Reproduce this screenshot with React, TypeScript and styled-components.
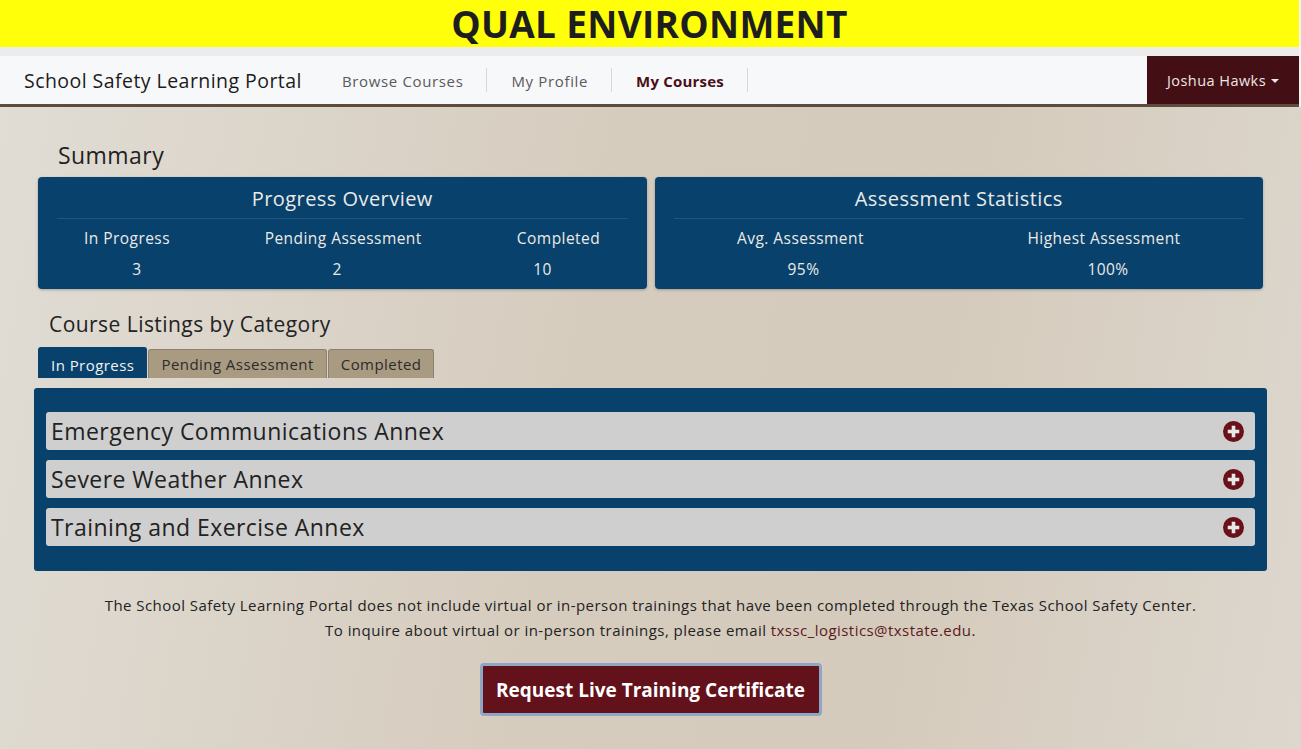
import React from "react";
import styled, { createGlobalStyle } from "styled-components";

const Global = createGlobalStyle`
  html, body { margin: 0; padding: 0; }
  body {
    font-family: "Open Sans", "Noto Sans", sans-serif;
    letter-spacing: 0.45px;
    background: #dbd3c7;
    min-height: 749px;
    overflow: hidden;
  }
  * { box-sizing: border-box; }
`;

const Page = styled.div`
  width: 1301px;
  height: 749px;
  display: flex;
  flex-direction: column;
  background: linear-gradient(100deg, #e1ddd5 0%, #d6ccbe 45%, #d5cbbc 70%, #ddd7ce 100%);
`;

const Header = styled.header`
  background: #f4f4f4;
  padding-right: 2px;
  display: flex;
  flex-direction: column;
`;

const Banner = styled.div`
  height: 47px;
  background: #ffff0a;
  display: flex;
  align-items: center;
  justify-content: center;
  font-size: 37px;
  font-weight: 700;
  color: #1e1e1e;
  letter-spacing: 0.3px;
`;

const Strip = styled.div`
  height: 9px;
  background: #ececec;
`;

const Nav = styled.nav`
  height: 51px;
  background: #f7f8fa;
  border-bottom: 3px solid #5b4c3c;
  display: flex;
  align-items: stretch;
`;

const Brand = styled.div`
  font-size: 19.5px;
  color: #1c1c1c;
  padding: 0 16px 0 24px;
  display: flex;
  align-items: center;
`;

const NavLink = styled.a<{ $active?: boolean }>`
  display: flex;
  align-items: center;
  padding: 1px 24px 0;
  font-size: 15px;
  text-decoration: none;
  color: ${(p) => (p.$active ? "#4a0f18" : "#5a5a5a")};
  font-weight: ${(p) => (p.$active ? 700 : 400)};
  letter-spacing: ${(p) => (p.$active ? "0.2px" : "0.65px")};
  position: relative;
  &::after {
    content: "";
    position: absolute;
    right: 0;
    top: 12px;
    bottom: 12px;
    width: 1px;
    background: #d8d8d8;
  }
`;

const Spacer = styled.div`
  flex: 1;
`;

const UserButton = styled.div`
  width: 152px;
  background: #430f14;
  color: #f0e6e6;
  font-size: 14.5px;
  display: flex;
  align-items: center;
  justify-content: center;
  gap: 5px;
  padding-top: 1px;
  &::after {
    content: "";
    border-left: 4px solid transparent;
    border-right: 4px solid transparent;
    border-top: 4px solid #f0e6e6;
    margin-top: 1px;
  }
`;

const Main = styled.main`
  flex: 1;
  padding: 0 34px;
  display: flex;
  flex-direction: column;
`;

const SummaryTitle = styled.h2`
  margin: 34px 0 0 24px;
  font-size: 23px;
  font-weight: 400;
  color: #222;
  line-height: 28px;
`;

const Cards = styled.div`
  display: grid;
  grid-template-columns: 1fr 1fr;
  gap: 8px;
  margin: 8px 4px 0 4px;
`;

const Card = styled.div`
  background: #08416c;
  border-radius: 4px;
  box-shadow: 0 1px 3px rgba(0, 0, 0, 0.25);
  padding: 9px 19px 10px;
  color: #eceae6;
  height: 112px;
`;

const CardTitle = styled.div`
  font-size: 20px;
  text-align: center;
  line-height: 26px;
  padding-bottom: 6px;
  border-bottom: 1px solid #1f5684;
`;

const StatRow = styled.div<{ $cols: string; $gap: number }>`
  display: grid;
  grid-template-columns: ${(p) => p.$cols};
  justify-content: space-between;
  text-align: center;
  margin-top: ${(p) => p.$gap}px;
`;

const StatLabel = styled.div`
  font-size: 15.5px;
  line-height: 20px;
`;

const StatValue = styled.div`
  font-size: 15.5px;
  line-height: 20px;
`;

const ListingTitle = styled.h2`
  margin: 22px 0 0 15px;
  font-size: 21px;
  font-weight: 400;
  color: #222;
  line-height: 26px;
`;

const Tabs = styled.div`
  display: flex;
  gap: 1px;
  margin: 10px 0 0 4px;
  align-items: flex-end;
`;

const Tab = styled.div<{ $active?: boolean }>`
  height: ${(p) => (p.$active ? "31px" : "29px")};
  padding: 0 12px;
  display: flex;
  align-items: center;
  font-size: 15px;
  border-radius: 3px 3px 0 0;
  background: ${(p) => (p.$active ? "#08416c" : "#a99b82")};
  color: ${(p) => (p.$active ? "#f2f2f2" : "#2b2b2b")};
  border: 1px solid ${(p) => (p.$active ? "#08416c" : "#8c8171")};
  border-bottom: none;
  padding-top: ${(p) => (p.$active ? "4px" : "0")};
`;

const Panel = styled.div`
  margin-top: 10px;
  background: #08416c;
  border-radius: 3px;
  padding: 24px 12px 25px;
  display: flex;
  flex-direction: column;
  gap: 10px;
`;

const Item = styled.div`
  height: 38px;
  background: #cfcfcf;
  border-radius: 3px;
  display: flex;
  align-items: center;
  justify-content: space-between;
  padding: 0 11px 0 5px;
  font-size: 23px;
  color: #222;
`;

const Note = styled.div`
  margin-top: 22px;
  text-align: center;
  font-size: 15px;
  line-height: 25px;
  color: #222;
`;

const Email = styled.a`
  color: #5c1a20;
  text-decoration: none;
`;

const ButtonRow = styled.div`
  display: flex;
  justify-content: center;
  margin-top: 20px;
`;

const CertButton = styled.button`
  width: 342px;
  height: 53px;
  background: #63111a;
  color: #fff;
  font-family: inherit;
  font-size: 19px;
  font-weight: 700;
  letter-spacing: 0;
  border: 3px solid #8fa6c6;
  border-radius: 4px;
`;

const PlusIcon = () => (
  <svg width="21" height="21" viewBox="0 0 20 20">
    <circle cx="10" cy="10" r="10" fill="#6a1019" />
    <rect x="4.5" y="8.3" width="11" height="3.4" fill="#e8e8e8" />
    <rect x="8.3" y="4.5" width="3.4" height="11" fill="#e8e8e8" />
  </svg>
);

const courses = [
  "Emergency Communications Annex",
  "Severe Weather Annex",
  "Training and Exercise Annex",
];

export default function App() {
  return (
    <Page>
      <Global />
      <Header>
        <Banner>QUAL ENVIRONMENT</Banner>
        <Strip />
        <Nav>
          <Brand>School Safety Learning Portal</Brand>
          <NavLink>Browse Courses</NavLink>
          <NavLink>My Profile</NavLink>
          <NavLink $active>My Courses</NavLink>
          <Spacer />
          <UserButton>Joshua Hawks</UserButton>
        </Nav>
      </Header>
      <Main>
        <SummaryTitle>Summary</SummaryTitle>
        <Cards>
          <Card>
            <CardTitle>Progress Overview</CardTitle>
            <StatRow $cols="140px 292px 138px" $gap={9}>
              <StatLabel>In Progress</StatLabel>
              <StatLabel>Pending Assessment</StatLabel>
              <StatLabel>Completed</StatLabel>
            </StatRow>
            <StatRow $cols="160px 240px 170px" $gap={11}>
              <StatValue>3</StatValue>
              <StatValue>2</StatValue>
              <StatValue>10</StatValue>
            </StatRow>
          </Card>
          <Card>
            <CardTitle>Assessment Statistics</CardTitle>
            <StatRow $cols="254px 280px" $gap={9}>
              <StatLabel>Avg. Assessment</StatLabel>
              <StatLabel>Highest Assessment</StatLabel>
            </StatRow>
            <StatRow $cols="260px 272px" $gap={11}>
              <StatValue>95%</StatValue>
              <StatValue>100%</StatValue>
            </StatRow>
          </Card>
        </Cards>
        <ListingTitle>Course Listings by Category</ListingTitle>
        <Tabs>
          <Tab $active>In Progress</Tab>
          <Tab>Pending Assessment</Tab>
          <Tab>Completed</Tab>
        </Tabs>
        <Panel>
          {courses.map((c) => (
            <Item key={c}>
              {c}
              <PlusIcon />
            </Item>
          ))}
        </Panel>
        <Note>
          The School Safety Learning Portal does not include virtual or in-person trainings that have been completed through the Texas School Safety Center.
          <br />
          To inquire about virtual or in-person trainings, please email{" "}
          <Email href="#">txssc_logistics@txstate.edu</Email>.
        </Note>
        <ButtonRow>
          <CertButton>Request Live Training Certificate</CertButton>
        </ButtonRow>
      </Main>
    </Page>
  );
}
